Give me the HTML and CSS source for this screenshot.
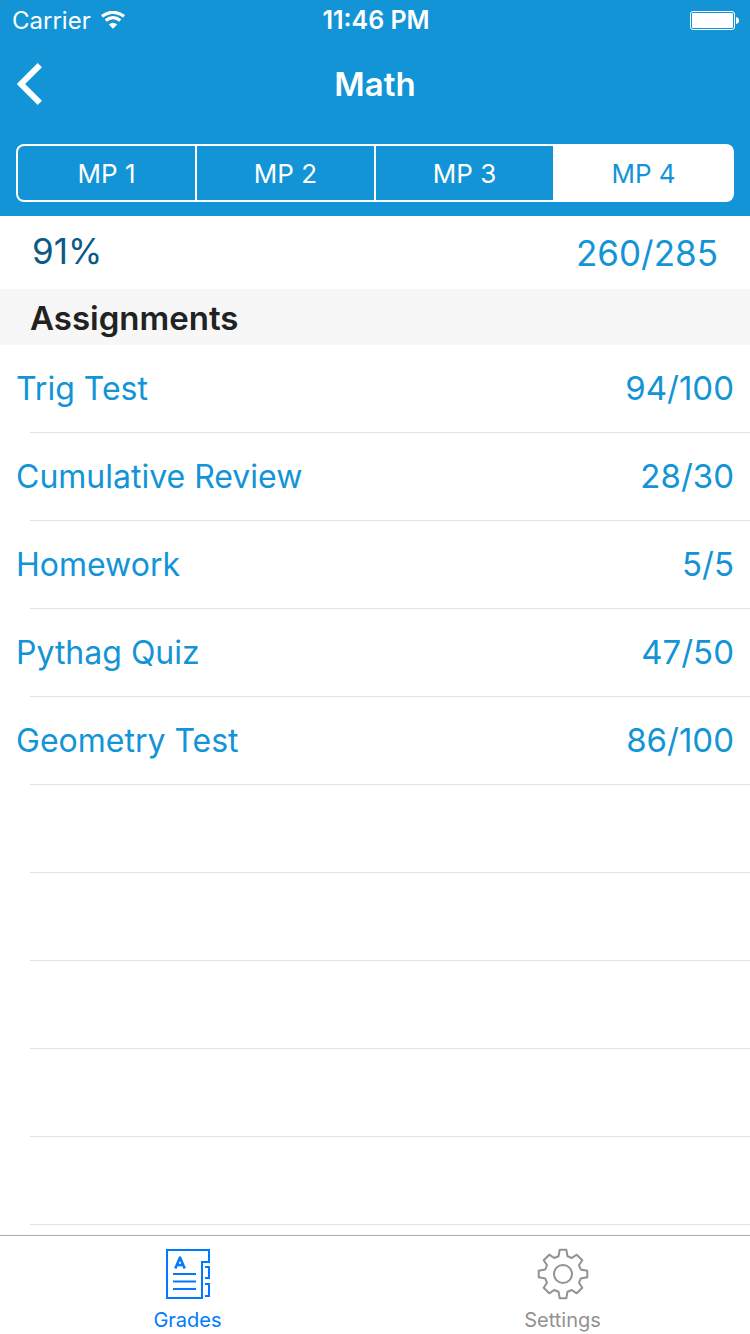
FILE: index.html
```
<!DOCTYPE html>
<html lang="en">
<head>
<meta charset="utf-8">
<meta name="viewport" content="width=device-width, initial-scale=1">
<title>Math</title>
<link rel="stylesheet" href="styles.css">
</head>
<body>
<div class="app">
  <header class="header">
    <div class="status">
      <div class="status-left">
        <span>Carrier</span>
        <svg class="wifi" viewBox="0 0 24 18" aria-hidden="true">
          <path d="M1 5.400 Q12 -2.800 23 5.400" fill="none" stroke="currentColor" stroke-width="3.200"/>
          <path d="M4.700 9.600 Q12 3.800 19.300 9.600" fill="none" stroke="currentColor" stroke-width="3.200"/>
          <path d="M7.800 13.400 Q12 10 16.200 13.400 L12 17.800 Z" fill="currentColor"/>
        </svg>
      </div>
      <span class="status-time">11:46 PM</span>
      <div class="status-right">
        <svg class="battery" viewBox="0 0 50 20" aria-hidden="true">
          <rect x="0.5" y="1.5" width="44" height="18" rx="2.5" fill="none" stroke="currentColor"/>
          <rect x="2" y="3" width="41" height="15" rx="1" fill="currentColor"/>
          <path d="M46 7 Q49 7.500 49 10.500 Q49 13.500 46 14 Z" fill="currentColor"/>
        </svg>
      </div>
    </div>
    <div class="navbar">
      <button class="back" type="button" aria-label="Back">
        <svg class="back-icon" viewBox="0 0 26 42" aria-hidden="true">
          <path d="M23.800 2.200 L5 21 L23.800 39.800" fill="none" stroke="currentColor" stroke-width="6"/>
        </svg>
      </button>
      <h1 class="title">Math</h1>
    </div>
    <div class="segments" role="group" aria-label="Marking period">
      <button class="segment" type="button">MP 1</button>
      <button class="segment" type="button">MP 2</button>
      <button class="segment" type="button">MP 3</button>
      <button class="segment segment-active" type="button" aria-pressed="true">MP 4</button>
    </div>
  </header>
  <main class="content">
    <section class="summary">
      <span class="percent">91%</span>
      <span class="points">260/285</span>
    </section>
    <h2 class="section-title">Assignments</h2>
    <ul class="list">
      <li class="row"><span>Trig Test</span><span class="score">94/100</span></li>
      <li class="row"><span>Cumulative Review</span><span class="score">28/30</span></li>
      <li class="row"><span>Homework</span><span class="score">5/5</span></li>
      <li class="row"><span>Pythag Quiz</span><span class="score">47/50</span></li>
      <li class="row"><span>Geometry Test</span><span class="score">86/100</span></li>
      <li class="row"></li>
      <li class="row"></li>
      <li class="row"></li>
      <li class="row"></li>
      <li class="row"></li>
    </ul>
  </main>
  <nav class="tabbar">
    <a class="tab tab-active" href="#grades">
      <svg class="tab-icon" viewBox="0 0 52 52" fill="none" stroke="currentColor" stroke-width="2" aria-hidden="true">
        <path d="M40 50 H5 V2 H47 V14 H40 Z"/>
        <path d="M43 19 H47 V30 H43 M43 36 H47 V48 H43"/>
        <path d="M11 26 H34 M11 33.500 H34 M11 41 H34"/>
        <path d="M13.300 20.500 L18 9.500 L22.700 20.500 M15 17 H21" stroke-width="2.600" stroke-linejoin="round"/>
      </svg>
      <span>Grades</span>
    </a>
    <a class="tab" href="#settings">
      <svg class="tab-icon" viewBox="-26 -26 52 52" fill="none" stroke="currentColor" stroke-width="2" stroke-linejoin="round" aria-hidden="true">
        <circle r="9"/>
        <path d="M-3.300 -24.300 H3.300 L4.500 -17.700 L8.800 -16 L13.700 -19.300 L19.300 -13.700 L16 -8.800 L17.700 -4.500 L24.300 -3.300 V3.300 L17.700 4.500 L16 8.800 L19.300 13.700 L13.700 19.300 L8.800 16 L4.500 17.700 L3.300 24.300 H-3.300 L-4.500 17.700 L-8.800 16 L-13.700 19.300 L-19.300 13.700 L-16 8.800 L-17.700 4.500 L-24.300 3.300 V-3.300 L-17.700 -4.500 L-16 -8.800 L-19.300 -13.700 L-13.700 -19.300 L-8.800 -16 L-4.500 -17.700 Z"/>
      </svg>
      <span>Settings</span>
    </a>
  </nav>
</div>
</body>
</html>
```
FILE: styles.css
```
* {
  box-sizing: border-box;
}

body {
  margin: 0;
  background: #fff;
  color: #1294d6;
  font-family: Inter, "Liberation Sans", sans-serif;
}

button {
  padding: 0;
  border: 0;
  background: none;
  color: inherit;
  font: inherit;
  cursor: pointer;
}

.app {
  display: flex;
  flex-direction: column;
  min-height: 100vh;
}

.header {
  padding-bottom: 14px;
  background: #1294d6;
  color: #fff;
}

.status {
  display: grid;
  grid-template-columns: 1fr auto 1fr;
  align-items: center;
  height: 40px;
  padding: 0 10px 0 12px;
  font-size: 24px;
}

.status-left {
  display: flex;
  align-items: center;
  gap: 10px;
}

.status-time {
  font-size: 25px;
  font-weight: 600;
}

.status-right {
  display: flex;
  justify-content: flex-end;
}

.wifi {
  width: 24px;
  height: 18px;
}

.battery {
  width: 50px;
  height: 20px;
}

.navbar {
  display: grid;
  grid-template-columns: 1fr auto 1fr;
  align-items: center;
  height: 88px;
  padding: 0 16px;
}

.back {
  display: flex;
  justify-self: start;
}

.back-icon {
  width: 26px;
  height: 42px;
}

.title {
  margin: 0;
  font-size: 33px;
  font-weight: 600;
}

.segments {
  display: grid;
  grid-template-columns: repeat(4, 1fr);
  gap: 2px;
  height: 58px;
  margin: 16px 16px 0;
  padding: 2px;
  border-radius: 8px;
  background: #fff;
  font-size: 26px;
}

.segment {
  background: #1294d6;
}

.segment:first-child {
  border-radius: 6px 0 0 6px;
}

.segment-active {
  background: #fff;
  color: #1294d6;
}

.content {
  flex: 1;
}

.summary {
  display: flex;
  justify-content: space-between;
  height: 73px;
  padding: 0 32px;
  font-size: 35px;
  line-height: 74px;
}

.percent {
  color: #0b5a85;
  line-height: 70px;
}

.section-title {
  margin: 0;
  padding: 0 30px;
  background: #f7f7f7;
  color: #222;
  font-size: 33px;
  font-weight: 600;
  line-height: 58px;
  height: 56px;
}

.list {
  margin: 0;
  padding: 0;
  list-style: none;
}

.row {
  display: flex;
  justify-content: space-between;
  height: 88px;
  padding: 0 16px;
  background: linear-gradient(#e3e3e5, #e3e3e5) 30px 100% / 100% 1px no-repeat;
  font-size: 32px;
  line-height: 87px;
}

.score {
  font-size: 33px;
}

.tabbar {
  display: grid;
  grid-template-columns: 1fr 1fr;
  height: 99px;
  border-top: 1px solid #acacac;
}

.tab {
  display: flex;
  flex-direction: column;
  align-items: center;
  gap: 8px;
  padding-top: 12px;
  color: #929292;
  font-size: 20px;
  line-height: 24px;
  text-decoration: none;
}

.tab-active {
  color: #007aff;
}

.tab-icon {
  width: 52px;
  height: 52px;
}
```
